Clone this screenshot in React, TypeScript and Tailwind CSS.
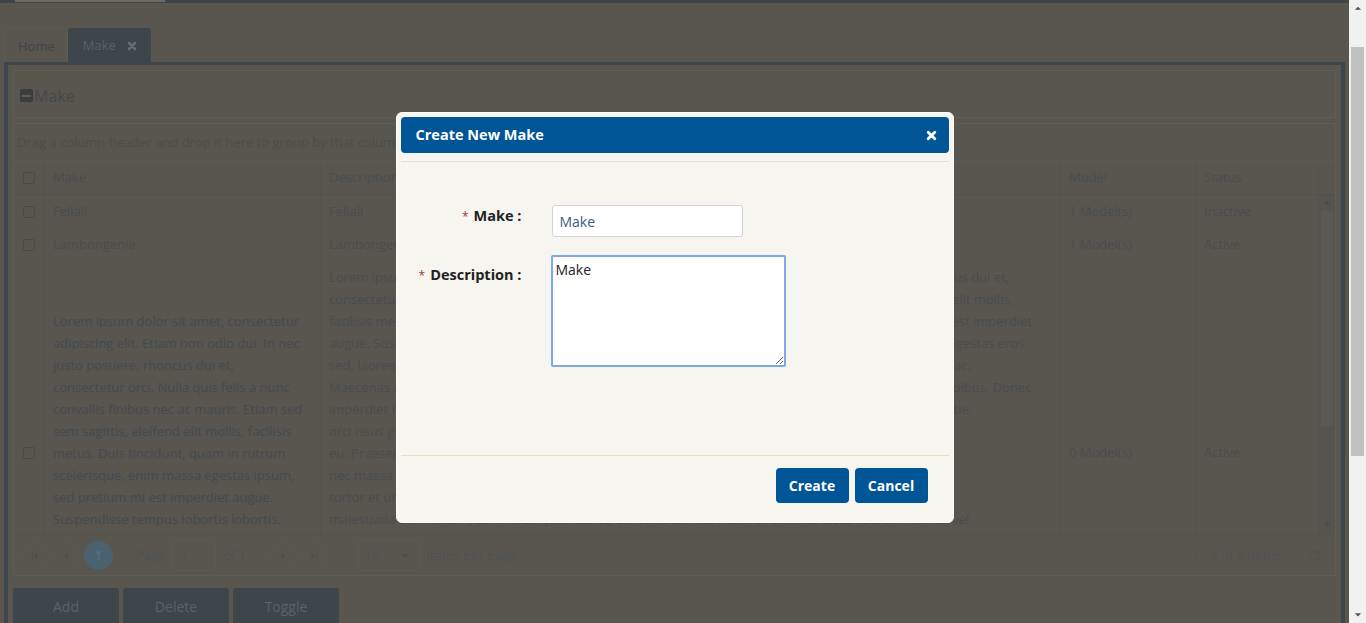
import { ChevronDown, RotateCw } from "lucide-react";

const makeLines = [
  "Lorem ipsum dolor sit amet, consectetur",
  "adipiscing elit. Etiam non odio dui. In nec",
  "justo posuere, rhoncus dui et,",
  "consectetur orci. Nulla quis felis a nunc",
  "convallis finibus nec ac mauris. Etiam sed",
  "sem sagittis, eleifend elit mollis, facilisis",
  "metus. Duis tincidunt, quam in rutrum",
  "scelerisque, enim massa egestas ipsum,",
  "sed pretium mi est imperdiet augue.",
  "Suspendisse tempus lobortis lobortis.",
  "Nunc vitae nibh sed justo porttitor",
  "posuere. Sed ac odio, egestas eros",
  "sed, laoreet nisi.",
];

const descLines = [
  "Lorem ipsum dolor sit amet, consectetur adipiscing elit. Etiam non odio dui. In nec justo posuere, rhoncus dui et,",
  "consectetur orci. Nulla quis felis a nunc convallis finibus nec ac mauris. Etiam sed sem sagittis, eleifend elit mollis,",
  "facilisis metus. Duis tincidunt, quam in rutrum scelerisque, enim massa egestas ipsum, sed pretium mi est imperdiet",
  "augue. Suspendisse tempus lobortis lobortis. Nunc vitae nibh sed justo porttitor posuere. Sed ac odio, egestas eros",
  "sed, laoreet nisi. Fusce vel lectus vitae ligula faucibus pulvinar. Integer ut nisl sed libero viverra placerat ac.",
  "Maecenas aliquet, ipsum at fermentum gravida, tellus nunc ultricies purus, in volutpat nibh lorem at dapibus. Donec",
  "imperdiet nulla non mauris varius, quis tempor augue scelerisque. Integer at tortor sed est porta molestie.",
  "orci risus gravida nunc, at commodo lorem lacus a quam. Aenean fermentum vulputate velit ultricies",
  "eu. Praesent vitae sem sit amet sapien pharetra sollicitudin non vel lectus. Morbi volutpat turpis. Nam",
  "nec massa ut lectus lobortis tincidunt. Pellentesque lacinia ultrices, nisl nisi laoreet ac. Sed quis",
  "tortor et urna lacinia porttitor. Curabitur vehicula nunc at ligula ultrices, ut condimentum non",
  "malesuada elementum, commodo quis felis at, convallis laoreet nulla. Ut ultricies lacus libero. Vivamus vel",
  "lacus non nisl efficitur tincidunt. Nulla facilisi. Sed at mi vitae sapien gravida volutpat.",
  "Cras in ipsum eget justo posuere feugiat vitae in nibh. Donec a lacus sed mauris pretium.",
  "Phasellus et mauris ac urna dictum fringilla. Quisque at est sit amet nisl pulvinar.",
  "Integer euismod, nunc vel posuere iaculis, felis leo tempor sem, nec volutpat elit.",
  "Aliquam erat volutpat.",
];

function Check() {
  return <span className="block h-[12px] w-[12px] rounded-[2px] border border-[#4b4a46]" />;
}

function XIcon({ className }: { className: string }) {
  return (
    <svg viewBox="0 0 10 10" className={className}>
      <path d="M2 2L8 8M8 2L2 8" stroke="currentColor" strokeWidth="2.6" strokeLinecap="round" />
    </svg>
  );
}

function Tri({ dir, className }: { dir: "up" | "down"; className: string }) {
  return (
    <svg viewBox="0 0 10 8" className={className}>
      <polygon points={dir === "up" ? "0,6 5,1 10,6" : "0,2 5,7 10,2"} fill="currentColor" />
    </svg>
  );
}

function PagerBtn({ kind }: { kind: "first" | "prev" | "next" | "last" }) {
  return (
    <span className="flex h-[28px] w-[28px] items-center justify-center rounded-full border border-[#5b5953] text-[#4c4f50]">
      <svg viewBox="0 0 10 10" className="h-[8px] w-[8px]">
        {kind === "first" && (
          <>
            <rect x="1" y="1" width="1.5" height="8" fill="currentColor" />
            <polygon points="8,1 8,9 3.5,5" fill="currentColor" />
          </>
        )}
        {kind === "prev" && <polygon points="7,1.5 7,8.5 3,5" fill="currentColor" />}
        {kind === "next" && <polygon points="3,1.5 3,8.5 7,5" fill="currentColor" />}
        {kind === "last" && (
          <>
            <polygon points="2,1 2,9 6.5,5" fill="currentColor" />
            <rect x="7.5" y="1" width="1.5" height="8" fill="currentColor" />
          </>
        )}
      </svg>
    </span>
  );
}

function HeaderCell({ label, w }: { label: string; w: string }) {
  return (
    <div className={`${w} flex items-center justify-between border-l border-[#55534d] pl-[8px] pr-[7px]`}>
      <span>{label}</span>
      <ChevronDown className="h-[13px] w-[13px] text-[#4c5053]" strokeWidth={1.5} />
    </div>
  );
}

function Row({ make, desc, model, status, tall }: { make: React.ReactNode; desc: React.ReactNode; model: string; status: string; tall?: boolean }) {
  const cell = `flex items-center border-l border-[#55534d] px-[8px] overflow-hidden ${tall ? "py-[5px]" : "h-[33px]"}`;
  return (
    <div className="flex">
      <div className="flex w-[30px] items-center justify-center">
        <Check />
      </div>
      <div className={`${cell} w-[276px]`}>{make}</div>
      <div className={`${cell} w-[740px]`}>{desc}</div>
      <div className={`${cell} w-[135px]`}>{model}</div>
      <div className={`${cell} w-[123px]`}>{status}</div>
    </div>
  );
}

export default function App() {
  return (
    <div className="relative flex h-[623px] w-full overflow-hidden bg-[#58564f] font-['Open_Sans',sans-serif] text-[13px] text-[#494d50]">
      <div className="flex min-w-0 flex-1 flex-col">
        <div className="h-[3px] shrink-0 bg-[#3e464b]">
          <div className="ml-[15px] h-[2px] w-[150px] bg-[#6b6a63]" />
        </div>

        <div className="mt-[25px] flex h-[34px] shrink-0 pl-[4px]">
          <div className="flex items-center rounded-t-[3px] border-x border-t border-[#5d5b54] pl-[13px] pr-[12px] pt-[2px] text-[#40454a]">
            Home
          </div>
          <div className="flex items-center gap-[11px] rounded-t-[3px] bg-[#3e464b] pl-[15px] pr-[14px] pt-[1px] text-[#5a6064]">
            <span>Make</span>
            <XIcon className="h-[10px] w-[10px] text-[#676c6f]" />
          </div>
        </div>

        <div className="mr-[4px] ml-[4px] flex min-h-0 flex-1 flex-col overflow-hidden border-x-4 border-t-[3px] border-[#3e464b]">
          <div className="mx-[5px] mt-[5px] flex h-[48px] shrink-0 items-center border border-[#5f5d57] pl-[6px] pt-[3px] text-[16px] text-[#46494b]">
            <span className="flex h-[13px] w-[13px] items-center justify-center rounded-[2px] bg-[#3c3d3d]">
              <span className="h-[2px] w-[9px] bg-[#5f5d58]" />
            </span>
            <span className="ml-[1px]">Make</span>
          </div>

          <div className="mx-[5px] mt-[5px] shrink-0 border border-[#5f5d57]">
            <div className="flex h-[38px] items-center border-b border-[#5c5a54] pl-[3px] text-[#4b4e4e]">
              Drag a column header and drop it here to group by that column
            </div>

            <div className="flex h-[33px] border-b border-[#53514b] text-[#4a4e51]">
              <div className="flex w-[30px] items-center justify-center">
                <Check />
              </div>
              <HeaderCell label="Make" w="w-[276px]" />
              <HeaderCell label="Description" w="w-[740px]" />
              <HeaderCell label="Model" w="w-[135px]" />
              <HeaderCell label="Status" w="w-[123px]" />
              <div className="flex-1 border-l border-[#55534d]" />
            </div>

            <div className="flex h-[340px]">
              <div className="min-w-0 flex-1 overflow-hidden">
                <Row make="Fellali" desc="Fellali" model="1 Model(s)" status="Inactive" />
                <Row make="Lambongenie" desc="Lambongenie" model="1 Model(s)" status="Active" />
                <Row
                  tall
                  make={
                    <div className="leading-[22px] text-[#434b53]">
                      {makeLines.map((l) => (
                        <div key={l} className="whitespace-nowrap">{l}</div>
                      ))}
                    </div>
                  }
                  desc={
                    <div className="leading-[22px]">
                      {descLines.map((l) => (
                        <div key={l} className="whitespace-nowrap">{l}</div>
                      ))}
                    </div>
                  }
                  model="0 Model(s)"
                  status="Active"
                />
              </div>
              <div className="flex w-[17px] flex-col items-center bg-[#56544e]">
                <Tri dir="up" className="mt-[5px] h-[5px] w-[8px] text-[#4a4a47]" />
                <div className="mt-[6px] h-[215px] w-[12px] bg-[#5b5953]" />
                <div className="flex-1" />
                <Tri dir="down" className="mb-[8px] h-[5px] w-[8px] text-[#4a4a47]" />
              </div>
            </div>

            <div className="flex h-[40px] items-center border-t border-[#55534d] pl-[7px] text-[#4f5253]">
              <PagerBtn kind="first" />
              <span className="ml-[3px]"><PagerBtn kind="prev" /></span>
              <span className="ml-[4px] flex h-[29px] w-[29px] items-center justify-center rounded-full bg-[#4a6270] text-[#5d7684]">1</span>
              <span className="ml-[23px]">Page</span>
              <span className="ml-[6px] flex h-[31px] w-[45px] items-center rounded-[3px] border border-[#5c5a54] pl-[8px] pt-[3px]">1</span>
              <span className="ml-[7px]">of 1</span>
              <span className="ml-[23px]"><PagerBtn kind="next" /></span>
              <span className="ml-[3px]"><PagerBtn kind="last" /></span>
              <span className="ml-[30px] flex h-[31px] w-[62px] items-center justify-between rounded-[3px] border border-[#5c5a54] pl-[5px] pr-[10px]">
                <span>10</span>
                <Tri dir="down" className="h-[5px] w-[8px] text-[#4a4d4e]" />
              </span>
              <span className="ml-[6px]">items per page</span>
              <span className="ml-auto">1 - 4 of 4 items</span>
              <RotateCw className="ml-[27px] mr-[14px] h-[13px] w-[13px] text-[#505354]" strokeWidth={2} />
            </div>
          </div>

          <div className="mt-[12px] ml-[5px] flex shrink-0 gap-[4px]">
            {["Add", "Delete", "Toggle"].map((b) => (
              <div key={b} className="flex h-[36px] w-[106px] items-center justify-center rounded-[3px] bg-[#3e464b] text-[14px] text-[#5b6165]">
                {b}
              </div>
            ))}
          </div>
        </div>
      </div>

      <div className="flex w-[17px] flex-col items-center bg-[#f1f1f1]">
        <Tri dir="up" className="mt-[6px] h-[5px] w-[8px] text-[#505050]" />
        <div className="mt-[36px] h-[409px] w-[13px] bg-[#c1c1c1]" />
        <div className="flex-1" />
        <Tri dir="down" className="mb-[6px] h-[5px] w-[8px] text-[#505050]" />
      </div>

      <div className="absolute inset-y-0 left-0 right-[17px] flex justify-center pt-[112px]">
        <div className="flex h-[411px] w-[558px] flex-col rounded-[6px] border border-[#fdfcf6] bg-[#f6f5f0] p-[4px] text-[#222]">
          <div className="flex h-[36px] items-center justify-between rounded-[4px] bg-[#005596] pl-[15px] pr-[12px] text-[14.5px] font-bold text-white">
            <span>Create New Make</span>
            <XIcon className="h-[11px] w-[11px] text-white" />
          </div>
          <div className="mt-[8px] h-px bg-[#e3e2dc]" />

          <div className="grid h-[293px] grid-cols-[121px_auto] content-start gap-x-[30px] gap-y-[18px] pt-[43px] text-[14.5px]">
            <div className="pt-[1px] text-right font-bold leading-[20px] whitespace-nowrap">
              <span className="mr-[5px] text-[12px] font-normal text-[#9a3b3b]">*</span>Make :
            </div>
            <input
              defaultValue="Make"
              className="h-[32px] w-[191px] rounded-[3px] border border-[#d3d3d3] bg-white px-[7px] text-[14px] text-[#3b5e80] outline-none"
            />
            <div className="pt-[10px] text-right font-bold leading-[20px] whitespace-nowrap">
              <span className="mr-[5px] text-[12px] font-normal text-[#9a3b3b]">*</span>Description :
            </div>
            <textarea
              autoFocus
              defaultValue="Make"
              className="-ml-px h-[112px] w-[235px] rounded-[2px] border-2 border-[#80a8e8] bg-white px-[3px] pt-[3px] text-[14px] leading-[20px] text-[#222] caret-black outline-none"
            />
          </div>

          <div className="h-px bg-[#e4dec2]" />
          <div className="flex justify-end gap-[6px] pr-[21px] pt-[12px]">
            <button className="h-[35px] w-[73px] rounded-[4px] bg-[#005596] text-[14px] font-bold text-white">Create</button>
            <button className="h-[35px] w-[73px] rounded-[4px] bg-[#005596] text-[14px] font-bold text-white">Cancel</button>
          </div>
        </div>
      </div>
    </div>
  );
}
